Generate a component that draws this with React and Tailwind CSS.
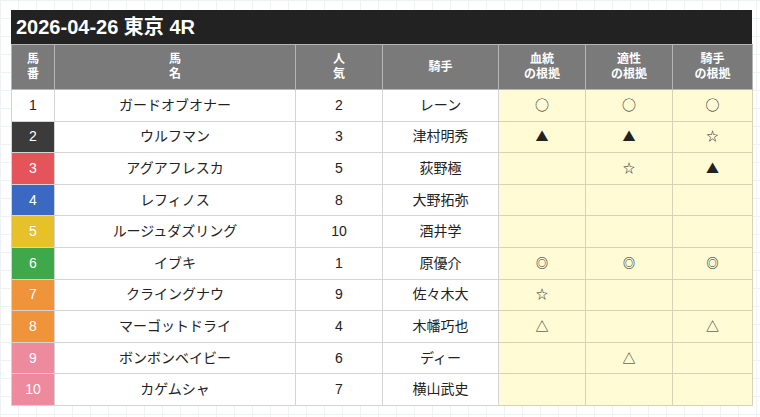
const rows = [
  { no: 1, name: "ガードオブオナー", pop: 2, jockey: "レーン", a: "○", b: "○", c: "○", color: "bg-white text-[#222]" },
  { no: 2, name: "ウルフマン", pop: 3, jockey: "津村明秀", a: "▲", b: "▲", c: "☆", color: "bg-[#3b3b3b] text-white" },
  { no: 3, name: "アグアフレスカ", pop: 5, jockey: "荻野極", a: "", b: "☆", c: "▲", color: "bg-[#e5535b] text-white" },
  { no: 4, name: "レフィノス", pop: 8, jockey: "大野拓弥", a: "", b: "", c: "", color: "bg-[#3b68c2] text-white" },
  { no: 5, name: "ルージュダズリング", pop: 10, jockey: "酒井学", a: "", b: "", c: "", color: "bg-[#e6c12b] text-white" },
  { no: 6, name: "イブキ", pop: 1, jockey: "原優介", a: "◎", b: "◎", c: "◎", color: "bg-[#3fa84b] text-white" },
  { no: 7, name: "クライングナウ", pop: 9, jockey: "佐々木大", a: "☆", b: "", c: "", color: "bg-[#ef943a] text-white" },
  { no: 8, name: "マーゴットドライ", pop: 4, jockey: "木幡巧也", a: "△", b: "", c: "△", color: "bg-[#ef943a] text-white" },
  { no: 9, name: "ボンボンベイビー", pop: 6, jockey: "ディー", a: "", b: "△", c: "", color: "bg-[#ee8a9d] text-white" },
  { no: 10, name: "カゲムシャ", pop: 7, jockey: "横山武史", a: "", b: "", c: "", color: "bg-[#ee8a9d] text-white" },
];

// glyph sizes tuned per mark
const markSize = {
  "○": "text-[14px]",
  "▲": "text-[13px]",
  "☆": "text-[12px]",
  "◎": "text-[12px] font-bold",
  "△": "text-[13px]",
};

function Mark({ m }) {
  if (!m) return null;
  return (
    <span className={`${markSize[m]} leading-none`} style={{ fontFamily: '"Noto Sans CJK JP", sans-serif' }}>
      {m}
    </span>
  );
}

function App() {
  return (
    <div
      className="w-[760px] h-[417px] overflow-hidden pl-[11px] pt-[10px] bg-white bg-[linear-gradient(to_right,#eef2f4_1px,transparent_1px),linear-gradient(to_bottom,#eef2f4_1px,transparent_1px)] bg-[size:18px_18px]"
      style={{ fontFamily: '"Liberation Sans", "Noto Sans CJK JP", sans-serif' }}
    >
      <div className="w-[741px]">
        <div className="h-[34px] bg-[#222222] text-white font-bold text-[20px] leading-[34px] pl-[5px]">
          2026-04-26 東京 4R
        </div>
        <table className="table-fixed border-collapse w-[741px] text-[14px] text-[#222]">
          <colgroup>
            <col className="w-[43px]" />
            <col className="w-[241px]" />
            <col className="w-[87px]" />
            <col className="w-[116px]" />
            <col className="w-[87px]" />
            <col className="w-[87px]" />
            <col className="w-[80px]" />
          </colgroup>
          <thead>
            <tr className="h-[45px] bg-[#7a7a7a] text-white font-bold text-[12px] leading-[15px]">
              <th className="border border-[#b5b5b5]">馬<br />番</th>
              <th className="border border-[#b5b5b5]">馬<br />名</th>
              <th className="border border-[#b5b5b5]">人<br />気</th>
              <th className="border border-[#b5b5b5]">騎手</th>
              <th className="border border-[#b5b5b5]">血統<br />の根拠</th>
              <th className="border border-[#b5b5b5]">適性<br />の根拠</th>
              <th className="border border-[#b5b5b5]">騎手<br />の根拠</th>
            </tr>
          </thead>
          <tbody>
            {rows.map((r) => (
              <tr key={r.no} className="h-[31.6px] text-center">
                <td className={`border border-[#d4d4d4] ${r.color}`}>{r.no}</td>
                <td className="border border-[#d4d4d4] bg-white">{r.name}</td>
                <td className="border border-[#d4d4d4] bg-white">{r.pop}</td>
                <td className="border border-[#d4d4d4] bg-white">{r.jockey}</td>
                <td className="border border-[#d8d2b4] bg-[#fffbd5]"><Mark m={r.a} /></td>
                <td className="border border-[#d8d2b4] bg-[#fffbd5]"><Mark m={r.b} /></td>
                <td className="border border-[#d8d2b4] bg-[#fffbd5]"><Mark m={r.c} /></td>
              </tr>
            ))}
          </tbody>
        </table>
      </div>
    </div>
  );
}

export default App;
